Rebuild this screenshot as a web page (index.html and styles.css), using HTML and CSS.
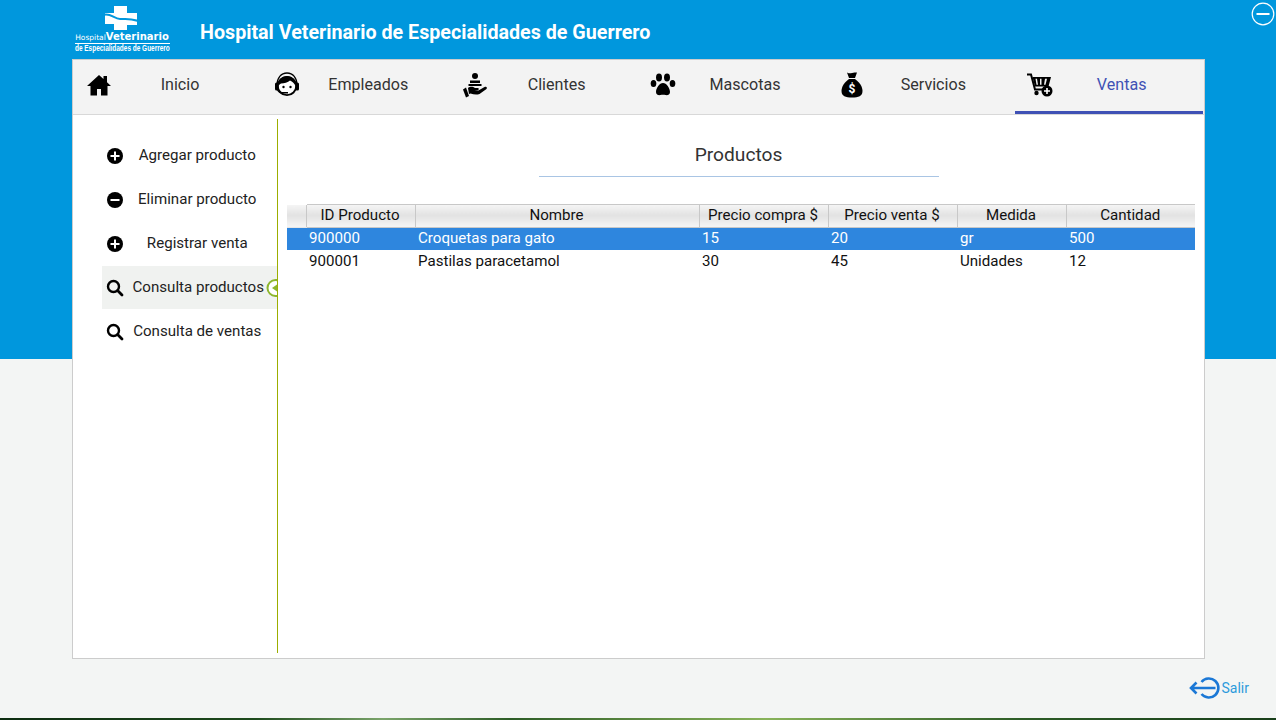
FILE: index.html
```html
<!DOCTYPE html>
<html lang="en">
<head>
    <meta charset="UTF-8">
    <meta name="viewport" content="width=device-width, initial-scale=1.0">
    <title>Hospital Veterinario</title>
    <link rel="stylesheet" href="styles.css">
</head>
<body>
    <header class="top">
        <div class="logo">
            <svg class="logo-cross" width="33" height="24" viewBox="0 0 33 24">
                <path fill="#fff" d="M10 0h13v7h10v12H23v5H10v-6H1V7h9z"/>
                <path fill="none" stroke="#0097dd" stroke-width="2" d="M-1 9c7-3 11 4 17 4s10-1 18 2"/>
            </svg>
            <div class="logo-line1"><span class="logo-small">Hospital</span>Veterinario</div>
            <div class="logo-line2">de Especialidades de Guerrero</div>
        </div>
        <h1 class="top-title">Hospital Veterinario de Especialidades de Guerrero</h1>
        <svg class="minimize" width="24" height="24" viewBox="0 0 24 24">
            <circle cx="12" cy="12" r="10.800" fill="none" stroke="#fff" stroke-width="1.200"/>
            <rect x="5.500" y="11" width="13" height="2" fill="#fff"/>
        </svg>
    </header>

    <div class="panel">
        <nav class="tabs">
            <a class="tab">
                <span class="tab-icon">
                    <svg width="26" height="22" viewBox="0 0 26 22"><path d="M13 1 1 12h3.500v9.500h6.500v-6.500h4v6.500h6.500V12H25l-4-3.700V2h-3.500v3.100z"/></svg>
                </span>
                <span class="tab-label">Inicio</span>
            </a>
            <a class="tab">
                <span class="tab-icon">
                    <svg width="26" height="26" viewBox="0 0 26 26">
                        <path fill="none" stroke="#000" stroke-width="1.300" d="M3 13C3 6 7 1 13 1s10 5 10 12"/>
                        <circle cx="13" cy="14" r="9.200" fill="#fff" stroke="#000" stroke-width="1.800"/>
                        <path d="M4.500 14C4.500 8 8 4 13 4s8.500 4 8.500 10c-1-2.500-3-4.500-5.500-5.500-2 2-6 3-9 3-1 .5-2 1.500-2.500 2.500z"/>
                        <rect x="1" y="10.500" width="3.600" height="8" rx="1.600"/>
                        <rect x="21.400" y="10.500" width="3.600" height="8" rx="1.600"/>
                        <circle cx="9.500" cy="15" r="1.200"/><circle cx="16.500" cy="15" r="1.200"/>
                        <path d="M3 18c1 3 4 3.500 7 3.500h4v-1.500h-4c-3 0-4.500-.5-6-2z"/>
                    </svg>
                </span>
                <span class="tab-label">Empleados</span>
            </a>
            <a class="tab">
                <span class="tab-icon">
                    <svg width="26" height="26" viewBox="0 0 26 26">
                        <circle cx="13" cy="4" r="3"/>
                        <path d="M8 8.500h10v2.500H8zM6.500 12h13v2h-13z"/>
                        <path d="m1 17.500 3-2 3 8.500-3 1.500z"/>
                        <path d="M6 16c3-2 5-1 7 0h3c1 0 1 2 0 2h-3.500l4 .5 6-3.500c2-1 3 .5 2 2l-7 5c-3 1-6 .5-9-.5l-1.500.5z"/>
                    </svg>
                </span>
                <span class="tab-label">Clientes</span>
            </a>
            <a class="tab">
                <span class="tab-icon">
                    <svg width="26" height="24" viewBox="0 0 26 24">
                        <ellipse cx="3.500" cy="10.500" rx="2.800" ry="3.600"/>
                        <ellipse cx="9" cy="4.500" rx="3" ry="4"/>
                        <ellipse cx="17" cy="4.500" rx="3" ry="4"/>
                        <ellipse cx="22.500" cy="10.500" rx="2.800" ry="3.600"/>
                        <path d="M13 10c3.500 0 7 5 7 9 0 3-3 3.500-4.500 3-1.500-.5-3.500-.5-5 0C9 22.500 6 22 6 19c0-4 3.500-9 7-9z"/>
                    </svg>
                </span>
                <span class="tab-label">Mascotas</span>
            </a>
            <a class="tab">
                <span class="tab-icon">
                    <svg width="24" height="26" viewBox="0 0 24 26">
                        <path d="M7 .5c2 1 3 1 5 .5s3-.5 5-.5l-2 5.500H9z"/>
                        <path d="M9 7h6c4 3 7.500 7 7.500 12 0 5-4 6.500-10.500 6.500S1.500 24 1.500 19C1.500 14 5 10 9 7z"/>
                        <text class="bag-sign" x="12" y="21" text-anchor="middle">$</text>
                    </svg>
                </span>
                <span class="tab-label">Servicios</span>
            </a>
            <a class="tab tab-active">
                <span class="tab-icon">
                    <svg width="26" height="24" viewBox="0 0 26 24">
                        <path fill="none" stroke="#000" stroke-width="2" d="M0 1.500h4l4 15h11"/>
                        <path d="M5.500 4H24l-2.500 9.500H8zM8.500 5.800l1 6h1.500l-1-6zM13 5.800v6h1.500v-6zM18 5.800l-1 6h1.500l1.500-6z" fill-rule="evenodd"/>
                        <circle cx="9.500" cy="20" r="2.200"/>
                        <circle cx="20" cy="18" r="5.500"/>
                        <path fill="#fff" d="M19.200 15h1.600v2.200H23v1.600h-2.200V21h-1.600v-2.200H17v-1.600h2.200z"/>
                    </svg>
                </span>
                <span class="tab-label">Ventas</span>
            </a>
        </nav>

        <div class="content">
            <aside class="side">
                <a class="side-item">
                    <svg class="side-icon" width="18" height="18" viewBox="0 0 18 18"><circle cx="9" cy="9" r="8"/><path fill="#fff" d="M8 4.500h2V8h3.500v2H10v3.500H8V10H4.500V8H8z"/></svg>
                    <span class="side-label">Agregar producto</span>
                </a>
                <a class="side-item">
                    <svg class="side-icon" width="18" height="18" viewBox="0 0 18 18"><circle cx="9" cy="9" r="8"/><path fill="#fff" d="M4.500 8h9v2h-9z"/></svg>
                    <span class="side-label">Eliminar producto</span>
                </a>
                <a class="side-item">
                    <svg class="side-icon" width="18" height="18" viewBox="0 0 18 18"><circle cx="9" cy="9" r="8"/><path fill="#fff" d="M8 4.500h2V8h3.500v2H10v3.500H8V10H4.500V8H8z"/></svg>
                    <span class="side-label">Registrar venta</span>
                </a>
                <a class="side-item side-active">
                    <svg class="side-icon" width="18" height="18" viewBox="0 0 18 18"><circle cx="7.500" cy="7.500" r="5.500" fill="none" stroke="#000" stroke-width="2.400"/><path stroke="#000" stroke-width="2.800" stroke-linecap="round" d="m11.800 11.800 4.200 4.200"/></svg>
                    <span class="side-label">Consulta productos</span>
                    <svg class="side-mark" width="11" height="18" viewBox="0 0 11 18"><circle cx="9.500" cy="9" r="8" fill="#fff" stroke="#8db62e" stroke-width="2"/><path fill="#8db62e" d="M6 9l5-3.500v7z"/></svg>
                </a>
                <a class="side-item">
                    <svg class="side-icon" width="18" height="18" viewBox="0 0 18 18"><circle cx="7.500" cy="7.500" r="5.500" fill="none" stroke="#000" stroke-width="2.400"/><path stroke="#000" stroke-width="2.800" stroke-linecap="round" d="m11.800 11.800 4.200 4.200"/></svg>
                    <span class="side-label">Consulta de ventas</span>
                </a>
            </aside>

            <main class="main">
                <h2 class="main-title">Productos</h2>
                <table class="grid">
                    <colgroup>
                        <col class="col-0"><col class="col-id"><col class="col-name">
                        <col class="col-buy"><col class="col-sell"><col class="col-unit"><col class="col-qty">
                    </colgroup>
                    <thead>
                        <tr>
                            <th class="corner"></th>
                            <th>ID Producto</th>
                            <th>Nombre</th>
                            <th>Precio compra $</th>
                            <th>Precio venta $</th>
                            <th>Medida</th>
                            <th>Cantidad</th>
                        </tr>
                    </thead>
                    <tbody>
                        <tr class="selected">
                            <td></td><td>900000</td><td>Croquetas para gato</td><td>15</td><td>20</td><td>gr</td><td>500</td>
                        </tr>
                        <tr>
                            <td></td><td>900001</td><td>Pastilas paracetamol</td><td>30</td><td>45</td><td>Unidades</td><td>12</td>
                        </tr>
                    </tbody>
                </table>
            </main>
        </div>
    </div>

    <footer class="bottom">
        <a class="exit">
            <svg width="32" height="24" viewBox="0 0 32 24">
                <path fill="none" stroke="#1b78d6" stroke-width="2.600" d="M12.500 6a9.500 9.500 0 1 1 0 12"/>
                <path fill="none" stroke="#1b78d6" stroke-width="2.600" d="M2 12h24.500M7.500 6.500 2 12l5.500 5.500"/>
            </svg>
            <span class="exit-label">Salir</span>
        </a>
    </footer>
    <div class="strip"></div>
</body>
</html>
```

FILE: styles.css
```css
* {
    box-sizing: border-box;
}
html, body {
    height: 720px;
}
body {
    margin: 0;
    overflow: hidden;
    font-family: Roboto, "Liberation Sans", sans-serif;
    color: #222;
    background: linear-gradient(#0097dd 0, #0097dd 359px, #f3f5f4 359px);
    display: flex;
    flex-direction: column;
}

/* top bar */
.top {
    position: relative;
    flex: none;
    height: 59px;
    padding-left: 72px;
    display: flex;
    align-items: center;
}
.logo {
    width: 100px;
    height: 59px;
    padding-top: 6px;
    color: white;
    text-align: center;
    display: flex;
    flex-direction: column;
    align-items: center;
}
.logo-cross {
    flex: none;
    margin-left: -4px;
    margin-bottom: 1px;
}
.logo-line1 {
    width: 95px;
    font-family: "DejaVu Sans", sans-serif;
    font-size: 10px;
    line-height: 11px;
    font-weight: 700;
    white-space: nowrap;
    border-bottom: 1px solid white;
}
.logo-small {
    font-size: 7.500px;
    font-weight: 400;
}
.logo-line2 {
    font-family: "Liberation Sans", sans-serif;
    font-size: 8.500px;
    line-height: 9px;
    font-weight: 700;
    white-space: nowrap;
    transform: scaleX(0.76);
}
.top-title {
    margin: 0 0 0 28px;
    font-size: 19.700px;
    font-weight: 700;
    color: white;
    padding-top: 6px;
}
.minimize {
    position: absolute;
    top: 2px;
    right: 1px;
}

/* main white panel */
.panel {
    flex: none;
    margin-left: 72px;
    width: 1133px;
    height: 600px;
    background-color: white;
    border: 1px solid #ccc;
    display: flex;
    flex-direction: column;
}
.tabs {
    flex: none;
    height: 55px;
    background-color: #f3f3f3;
    border-bottom: 1px solid #d8d8d8;
    display: grid;
    grid-template-columns: repeat(6, 1fr);
    padding-right: 1px;
}
.tab {
    display: flex;
    align-items: center;
    font-size: 16.100px;
    color: #333;
    padding-top: 1px;
    padding-bottom: 3px;
    border-bottom: 3px solid transparent;
}
.tab-active {
    color: #3f51b5;
    border-bottom-color: #3f51b5;
}
.tab-icon {
    width: 51px;
    display: flex;
    justify-content: center;
}
.tab-label {
    width: 112px;
    text-align: center;
}
.bag-sign {
    font-size: 12px;
    font-weight: 700;
    fill: white;
}

.content {
    flex: 1;
    display: flex;
    padding-top: 4px;
}

/* side menu */
.side {
    width: 205px;
    height: 534px;
    padding-left: 29px;
    padding-top: 15px;
    border-right: 1px solid #9cae00;
}
.side-item {
    position: relative;
    height: 43px;
    margin-bottom: 1px;
    display: flex;
    align-items: center;
    font-size: 15.100px;
    color: #222;
    padding-left: 4px;
    padding-bottom: 1px;
}
.side-active {
    background-color: #f0f2f0;
}
.side-icon {
    flex: none;
    margin-top: 2px;
}
.side-label {
    flex: 1;
    text-align: center;
    padding-right: 6px;
    white-space: nowrap;
}
.side-active .side-label {
    padding-right: 2px;
    margin-left: -2px;
}
.side-mark {
    position: absolute;
    right: 0;
    top: 13px;
}

/* products table */
.main {
    flex: 1;
    padding: 0 9px;
}
.main-title {
    width: 400px;
    margin: 24px 0 27px 252px;
    padding-bottom: 10px;
    font-size: 19.200px;
    font-weight: 400;
    text-align: center;
    color: #333;
    line-height: 23px;
    border-bottom: 1px solid #a9c5e4;
}
.grid {
    width: 908px;
    border-collapse: collapse;
    table-layout: fixed;
    font-size: 15.100px;
}
.col-0 { width: 19px; }
.col-id { width: 109px; }
.col-name { width: 284px; }
.col-buy { width: 129px; }
.col-sell { width: 129px; }
.col-unit { width: 109px; }
.col-qty { width: 129px; }
.grid th {
    height: 23px;
    padding: 0 1px 3px 0;
    font-weight: 400;
    color: #111;
    background: linear-gradient(#f4f4f4, #e2e2e2 45%, #f6f6f6);
    border-top: 1px solid #c8c8c8;
    border-bottom: 1px solid #c8c8c8;
    border-left: 1px solid #c8c8c8;
}
.grid th.corner {
    border-color: transparent;
    border-bottom-color: #e6e6e6;
}
.grid td {
    height: 22px;
    padding: 0 0 0 3px;
    white-space: nowrap;
    color: #111;
}
.selected td {
    padding-bottom: 1px;
    background-color: #2e86de;
    color: white;
}

/* exit link */
.bottom {
    flex: 1;
    display: flex;
    justify-content: flex-end;
    padding-right: 27px;
    padding-top: 17px;
}
.exit {
    height: 24px;
    display: flex;
    align-items: center;
    gap: 1px;
    font-size: 14px;
    color: #2d9bdc;
}
.strip {
    flex: none;
    height: 2px;
    background: linear-gradient(90deg, #0c2c10, #1d4a1c 20%, #7aa46a 30%, #2c5c26 40%, #88b35a 60%, #2c5c26 80%, #193f1a);
}
```
